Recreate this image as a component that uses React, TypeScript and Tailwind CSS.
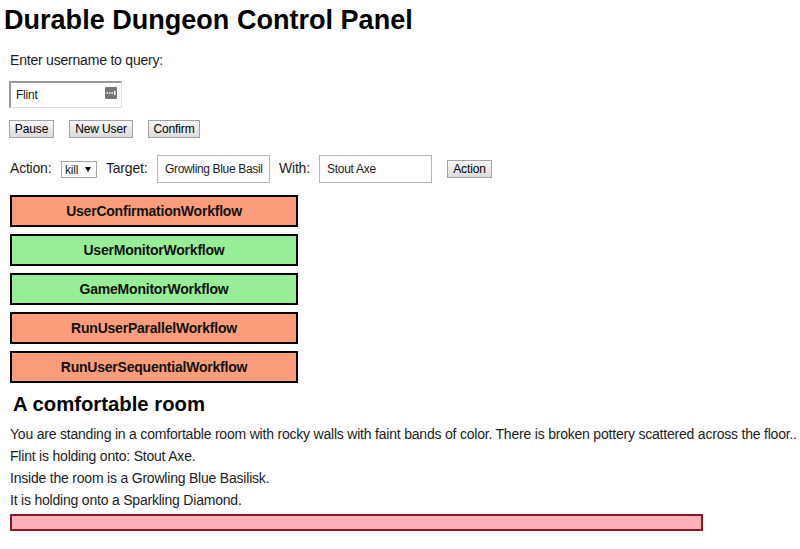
import React from "react";

function Btn({ label, className }: { label: string; className: string }) {
  return (
    <button className={`flex h-[18px] items-center justify-center border border-[#a3a3a3] bg-linear-to-b from-[#f6f6f6] to-[#dcdcdc] text-[12px] tracking-[-0.12px] whitespace-nowrap text-black ${className}`}>
      {label}
    </button>
  );
}

const workflows = [
  { name: "UserConfirmationWorkflow", done: false },
  { name: "UserMonitorWorkflow", done: true },
  { name: "GameMonitorWorkflow", done: true },
  { name: "RunUserParallelWorkflow", done: false },
  { name: "RunUserSequentialWorkflow", done: false },
];

const lines = [
  "You are standing in a comfortable room with rocky walls with faint bands of color. There is broken pottery scattered across the floor..",
  "Flint is holding onto: Stout Axe.",
  "Inside the room is a Growling Blue Basilisk.",
  "It is holding onto a Sparkling Diamond.",
];

export default function App() {
  return (
    <div className="h-[549px] w-[800px] overflow-hidden bg-white font-['Liberation_Sans',Arial,sans-serif] text-[14px] tracking-[-0.207px] text-[#1c1c1c]">
      <h1 className="ml-1 pt-[4px] text-[27.05px] leading-[32px] font-bold tracking-normal whitespace-nowrap text-black">Durable Dungeon Control Panel</h1>
      <p className="mt-[15px] ml-[10px] leading-[18px]">Enter username to query:</p>
      <div className="mt-[12px] ml-[9px] flex h-[27px] w-[113px] items-center justify-between border-t-2 border-r border-b border-l-2 border-[#dedede] border-t-[#999] border-l-[#999] pr-[4px] pl-[5px] text-[12px]">
        <span className="pb-px">Flint</span>
        <svg className="mb-[4px]" width="12" height="12" viewBox="0 0 12 12">
          <rect width="12" height="12" rx="1" fill="#777" />
          <path d="M1.5 6h1.5M4 6h1.5M6.5 6H8M9.8 4v4" stroke="#fff" strokeWidth="1.4" />
        </svg>
      </div>
      <div className="mt-[12px] ml-[9px] flex">
        <Btn label="Pause" className="w-[45px]" />
        <Btn label="New User" className="ml-[15px] w-[64px]" />
        <Btn label="Confirm" className="ml-[15px] w-[52px]" />
      </div>
      <div className="mt-[17px] ml-[10px] flex h-[28px]">
        <span className="w-[51px] pt-[4px] leading-[18px]">Action:</span>
        <div className="mt-[6px] flex h-[17px] w-[36px] items-center justify-between border border-[#a5a5a5] pr-[5px] pl-[3px] text-[12px]">
          kill
          <svg className="mb-px" width="6" height="5" viewBox="0 0 6 5"><path d="M0 0h6L3 5z" fill="#111" /></svg>
        </div>
        <span className="ml-[9px] w-[51px] pt-[4px] leading-[18px]">Target:</span>
        <div className="flex w-[113px] items-center border border-[#b5b5b5] pb-px pl-[7px] text-[12px] tracking-[-0.34px] whitespace-nowrap">Growling Blue Basil</div>
        <span className="ml-[9px] w-[40px] pt-[4px] leading-[18px]">With:</span>
        <div className="flex w-[113px] items-center border border-[#b5b5b5] px-[7px] pb-px text-[12px] tracking-[-0.27px]">Stout Axe</div>
        <Btn label="Action" className="mt-[5px] ml-[15px] w-[45px]" />
      </div>
      <div className="mt-[12px] ml-[10px] flex w-[288px] flex-col gap-[7px]">
        {workflows.map((w) => (
          <div key={w.name} className={`flex h-8 items-center justify-center border-2 border-black text-[14px] font-bold tracking-[-0.22px] text-[#111] ${w.done ? "bg-[#98ee96]" : "bg-[#fb9d7a]"}`}>
            {w.name}
          </div>
        ))}
      </div>
      <h2 className="mt-[8px] ml-[13px] text-[20.3px] leading-[26px] font-bold tracking-normal text-black">A comfortable room</h2>
      <div className="mt-[6px] ml-[10px]">
        {lines.map((l) => <p key={l} className="h-[22px] leading-[22px] whitespace-nowrap">{l}</p>)}
      </div>
      <div className="mt-[3px] ml-[10px] h-[17px] w-[693px] border-2 border-[#8b1a22] bg-[#ffb0bd]" />
    </div>
  );
}
